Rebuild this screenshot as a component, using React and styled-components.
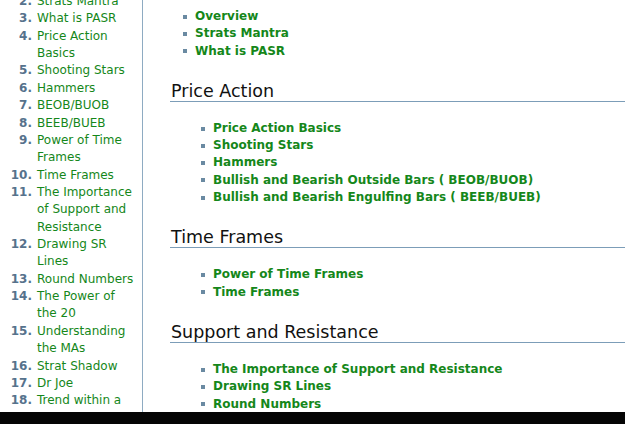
import React from "react";
import styled, { createGlobalStyle } from "styled-components";

const Global = createGlobalStyle`
  html, body { margin: 0; padding: 0; background: #fff; }
  body { font-family: "DejaVu Sans", Verdana, sans-serif; }
`;

const Page = styled.div`
  width: 625px;
  height: 424px;
  display: flex;
  flex-direction: column;
  overflow: hidden;
`;

const Main = styled.div`
  flex: 1;
  display: flex;
  min-height: 0;
`;

const Sidebar = styled.nav`
  width: 142px;
  flex: none;
  border-right: 1px solid #8eabc2;
  overflow: hidden;
`;

/* the sidebar is scrolled a little, so the list starts above the top edge */
const NavList = styled.ol`
  list-style: none;
  margin: -7px 0 0 0;
  padding: 0 7px 0 0;
  font-size: 12px;
  line-height: 17.36px;
`;

const NavItem = styled.li`
  display: flex;
  align-items: flex-start;
`;

const NavNum = styled.span`
  flex: none;
  width: 32px;
  text-align: right;
  font-weight: bold;
  color: #56728c;
`;

const NavLink = styled.a`
  margin-left: 5px;
  color: #15871a;
  text-decoration: none;
`;

const Content = styled.main`
  flex: 1;
  padding: 8px 0 0 27px;
  min-width: 0;
`;

const LinkList = styled.ul`
  list-style: none;
  margin: 0;
  padding: 0 0 0 ${(p) => p.$indent}px;
  font-size: 12px;
  line-height: 17.3px;
`;

const LinkItem = styled.li`
  display: flex;
  align-items: center;
`;

const Bullet = styled.span`
  flex: none;
  width: 4px;
  height: 4px;
  background: #6a8aa2;
  margin-right: 8px;
`;

const Link = styled.a`
  color: #15871a;
  font-weight: bold;
  text-decoration: none;
  white-space: nowrap;
`;

const Heading = styled.h2`
  margin: 19px 0 18px 0;
  padding: 2px 0 0 1px;
  font-size: 17.5px;
  font-weight: normal;
  line-height: 20px;
  color: #111;
  border-bottom: 1px solid #7c9db8;
`;

const Taskbar = styled.div`
  height: 12px;
  flex: none;
  background: #050505;
`;

const nav = [
  ["2.", "Strats Mantra"],
  ["3.", "What is PASR"],
  ["4.", "Price Action Basics"],
  ["5.", "Shooting Stars"],
  ["6.", "Hammers"],
  ["7.", "BEOB/BUOB"],
  ["8.", "BEEB/BUEB"],
  ["9.", "Power of Time Frames"],
  ["10.", "Time Frames"],
  ["11.", "The Importance of Support and Resistance"],
  ["12.", "Drawing SR Lines"],
  ["13.", "Round Numbers"],
  ["14.", "The Power of the 20"],
  ["15.", "Understanding the MAs"],
  ["16.", "Strat Shadow"],
  ["17.", "Dr Joe"],
  ["18.", "Trend within a trend"],
];

const intro = ["Overview", "Strats Mantra", "What is PASR"];

const sections = [
  {
    title: "Price Action",
    links: [
      "Price Action Basics",
      "Shooting Stars",
      "Hammers",
      "Bullish and Bearish Outside Bars ( BEOB/BUOB)",
      "Bullish and Bearish Engulfing Bars ( BEEB/BUEB)",
    ],
  },
  { title: "Time Frames", links: ["Power of Time Frames", "Time Frames"] },
  {
    title: "Support and Resistance",
    links: [
      "The Importance of Support and Resistance",
      "Drawing SR Lines",
      "Round Numbers",
    ],
  },
];

function Links({ items, indent }) {
  return (
    <LinkList $indent={indent}>
      {items.map((t) => (
        <LinkItem key={t}>
          <Bullet />
          <Link href="#">{t}</Link>
        </LinkItem>
      ))}
    </LinkList>
  );
}

export default function App() {
  return (
    <Page>
      <Global />
      <Main>
        <Sidebar>
          <NavList>
            {nav.map(([n, t]) => (
              <NavItem key={n}>
                <NavNum>{n}</NavNum>
                <NavLink href="#">{t}</NavLink>
              </NavItem>
            ))}
          </NavList>
        </Sidebar>
        <Content>
          <Links items={intro} indent={13} />
          {sections.map((s) => (
            <section key={s.title}>
              <Heading>{s.title}</Heading>
              <Links items={s.links} indent={31} />
            </section>
          ))}
        </Content>
      </Main>
      <Taskbar />
    </Page>
  );
}
